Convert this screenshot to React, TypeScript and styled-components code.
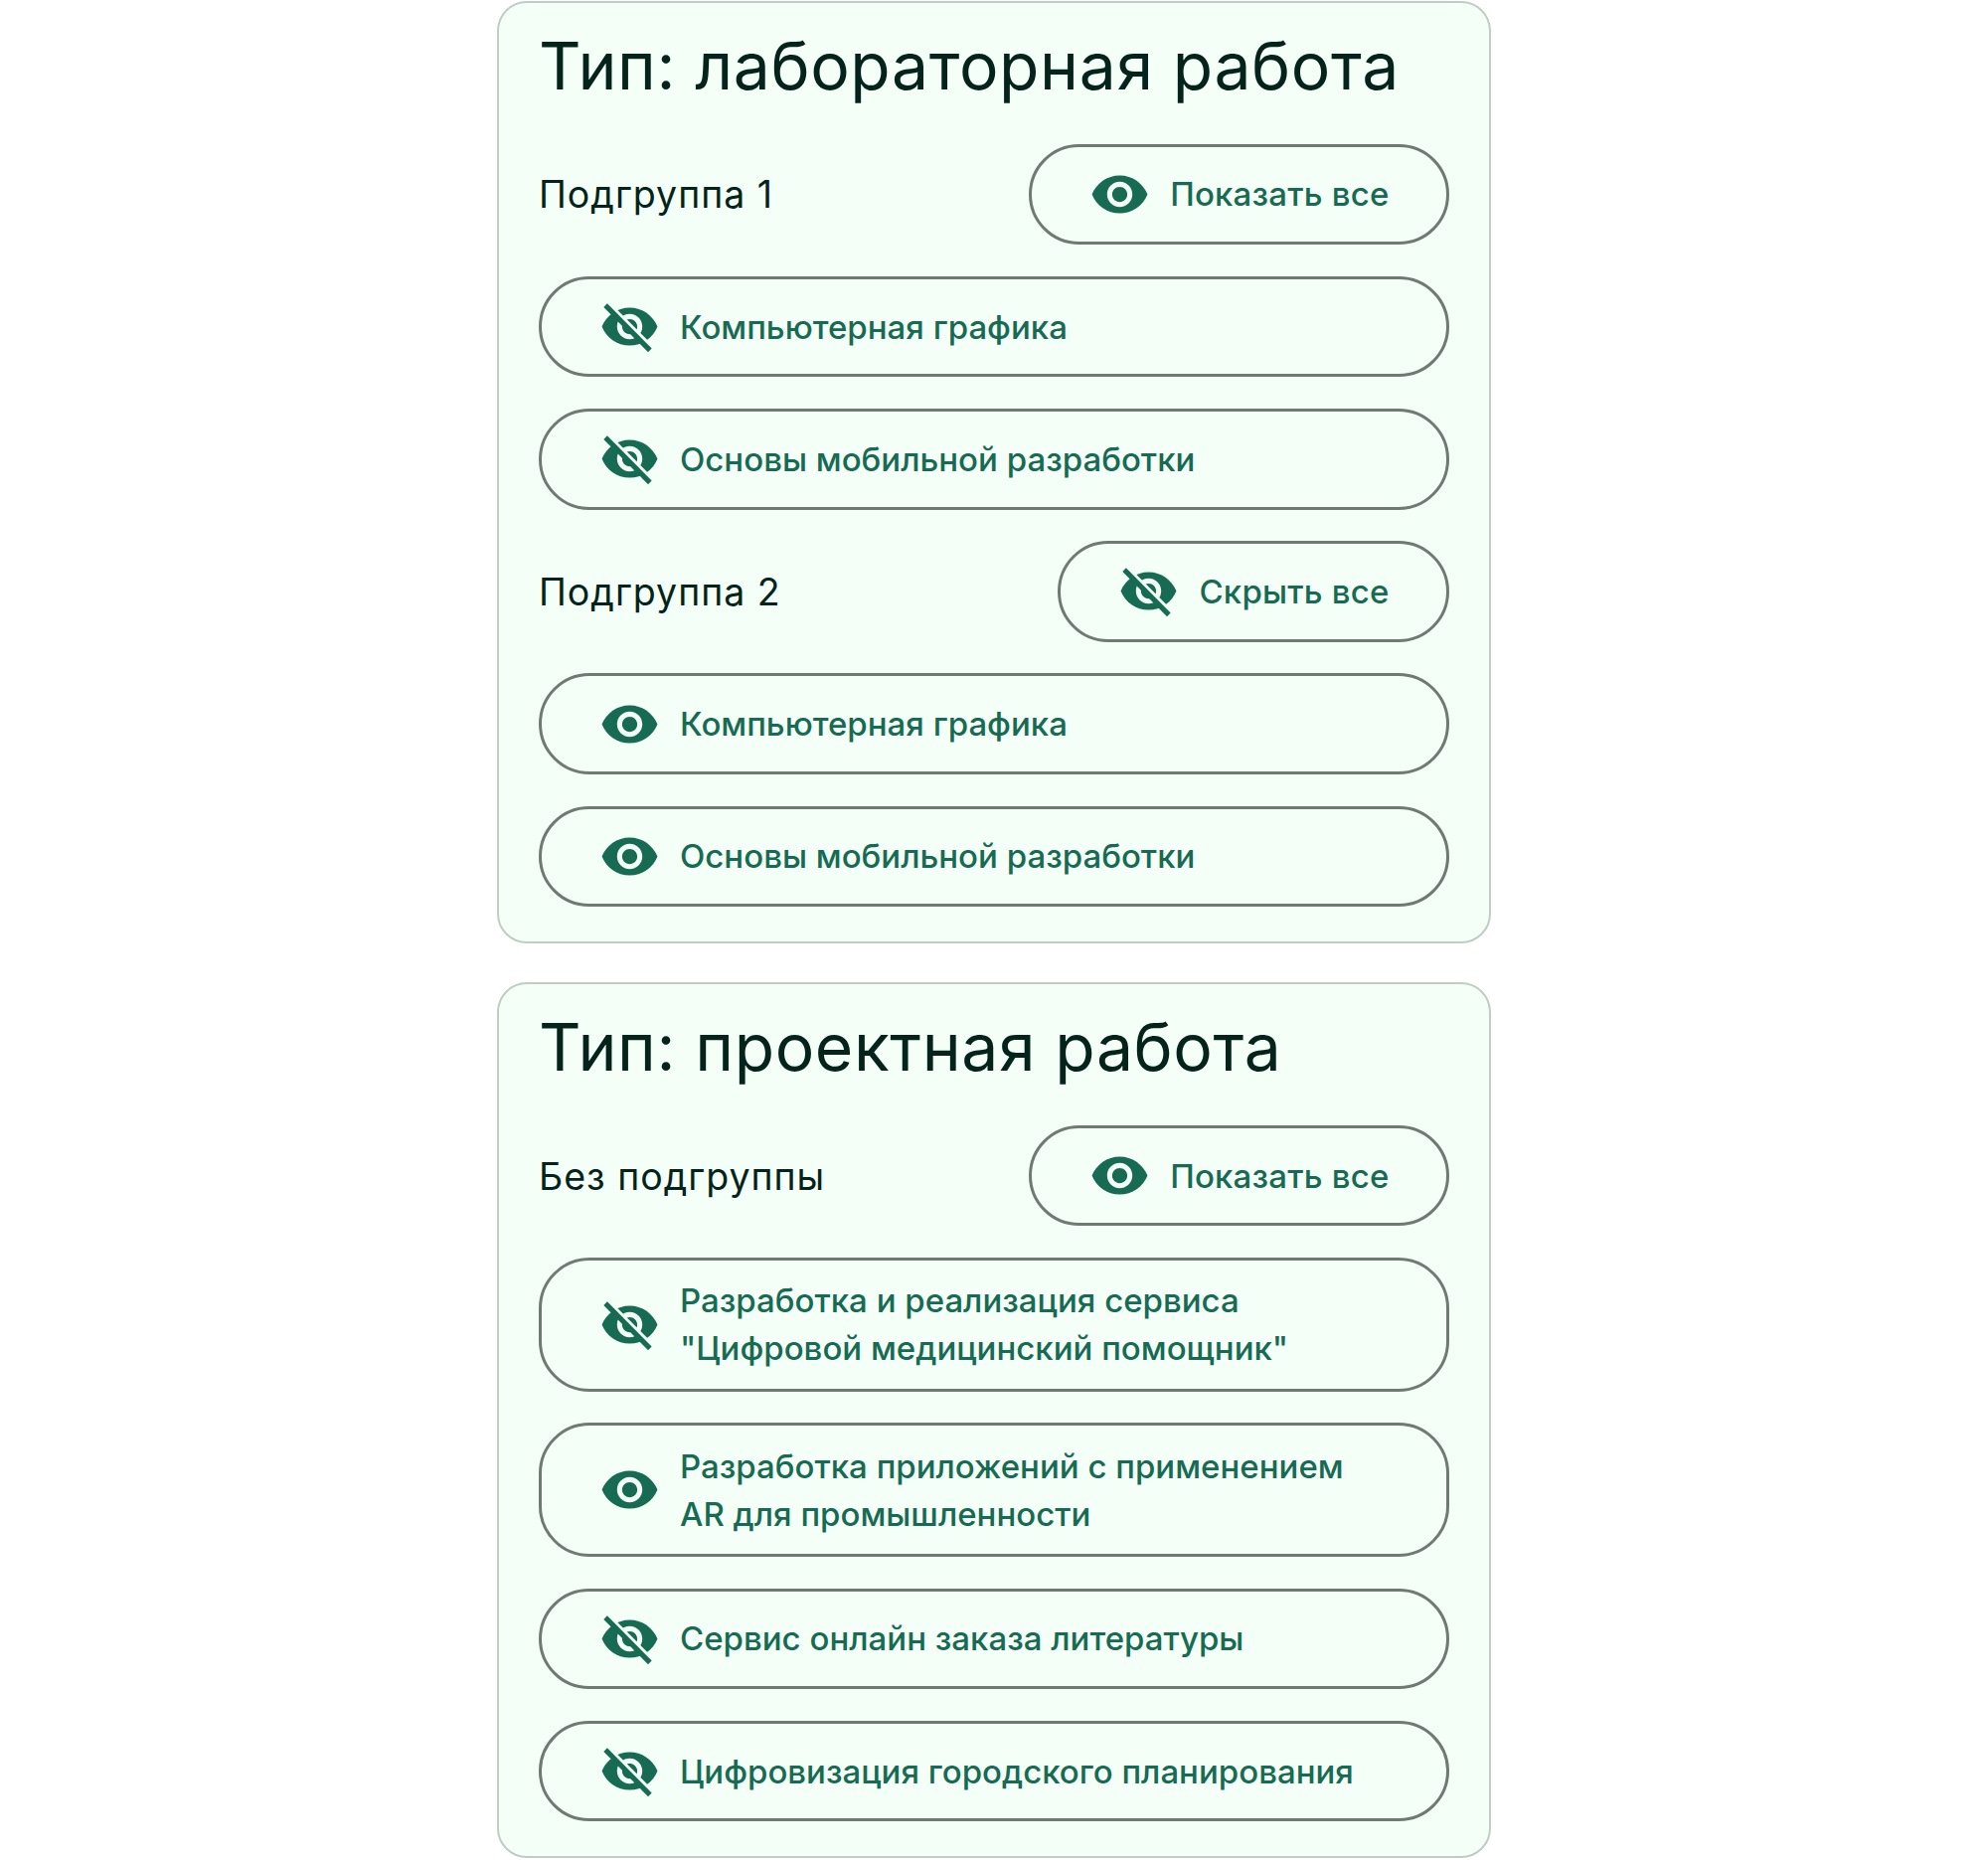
import React from "react";
import styled, { createGlobalStyle } from "styled-components";

const GlobalStyle = createGlobalStyle`
  html, body {
    margin: 0;
    padding: 0;
    background: #fff;
  }
  * {
    box-sizing: border-box;
  }
`;

const Page = styled.main`
  width: 1000px;
  margin: 0 auto;
  padding-top: 1px;
  display: flex;
  flex-direction: column;
  gap: 39px;
  font-family: Inter, "Liberation Sans", sans-serif;
`;

const Card = styled.section`
  background: #f4fff8;
  border: 2px solid #bfcdc6;
  border-radius: 30px;
  padding: 0 40px 35px;
  display: flex;
  flex-direction: column;
  gap: 31.6px;
`;

const Title = styled.h2`
  margin: 0;
  height: 110px;
  padding-top: 23px;
  font-size: 66px;
  line-height: 80px;
  font-weight: 400;
  letter-spacing: 0.6px;
  color: #04231a;
`;

const GroupHeader = styled.div`
  display: flex;
  align-items: center;
  justify-content: space-between;
`;

const GroupName = styled.span`
  padding-top: 2px;
  font-size: 37.5px;
  line-height: 48px;
  color: #04231a;
  letter-spacing: 1px;
`;

const Pill = styled.button<{ $full?: boolean }>`
  display: flex;
  align-items: center;
  gap: 20px;
  width: ${(p) => (p.$full ? "100%" : "auto")};
  min-height: 101.6px;
  padding: 16.4px 57.5px 16.4px 58px;
  background: transparent;
  border: 3px solid #6f7a73;
  border-radius: 51px;
  font-family: inherit;
  font-size: 33px;
  line-height: 48px;
  font-weight: 500;
  letter-spacing: ${(p) => (p.$full ? "0" : "0.2px")};
  color: #176b52;
  text-align: left;
`;

const EyeIcon = styled.svg`
  flex: none;
  width: 61px;
  height: 61px;
  fill: #176b52;
`;

const eyePath =
  "M12 4.5C7 4.5 2.73 7.61 1 12c1.73 4.39 6 7.5 11 7.5s9.27-3.11 11-7.5c-1.73-4.39-6-7.5-11-7.5zM12 17c-2.76 0-5-2.24-5-5s2.24-5 5-5 5 2.24 5 5-2.24 5-5 5zm0-8c-1.66 0-3 1.34-3 3s1.34 3 3 3 3-1.34 3-3-1.34-3-3-3z";

const Eye = ({ off }: { off?: boolean }) => (
  <EyeIcon viewBox="0 0 24 24">
    <path d={eyePath} />
    {off && (
      <>
        <line x1="3.6" y1="3" x2="21.6" y2="21" stroke="#f4fff8" strokeWidth="1.6" />
        <line x1="2.4" y1="3.6" x2="20" y2="21.4" stroke="#176b52" strokeWidth="2" />
      </>
    )}
  </EyeIcon>
);

interface ItemType {
  title: React.ReactNode;
  off?: boolean;
}

const Item = ({ title, off }: ItemType) => (
  <Pill $full>
    <Eye off={off} />
    <span>{title}</span>
  </Pill>
);

const Group = ({ name, all, off }: { name: string; all: string; off?: boolean }) => (
  <GroupHeader>
    <GroupName>{name}</GroupName>
    <Pill>
      <Eye off={off} />
      <span>{all}</span>
    </Pill>
  </GroupHeader>
);

const App = () => (
  <>
    <GlobalStyle />
    <Page>
      <Card>
        <Title>Тип: лабораторная работа</Title>
        <Group name="Подгруппа 1" all="Показать все" />
        <Item title="Компьютерная графика" off />
        <Item title="Основы мобильной разработки" off />
        <Group name="Подгруппа 2" all="Скрыть все" off />
        <Item title="Компьютерная графика" />
        <Item title="Основы мобильной разработки" />
      </Card>
      <Card>
        <Title>Тип: проектная работа</Title>
        <Group name="Без подгруппы" all="Показать все" />
        <Item
          off
          title={
            <>
              Разработка и реализация сервиса
              <br />
              "Цифровой медицинский помощник"
            </>
          }
        />
        <Item
          title={
            <>
              Разработка приложений с применением
              <br />
              AR для промышленности
            </>
          }
        />
        <Item title="Сервис онлайн заказа литературы" off />
        <Item title="Цифровизация городского планирования" off />
      </Card>
    </Page>
  </>
);

export default App;
